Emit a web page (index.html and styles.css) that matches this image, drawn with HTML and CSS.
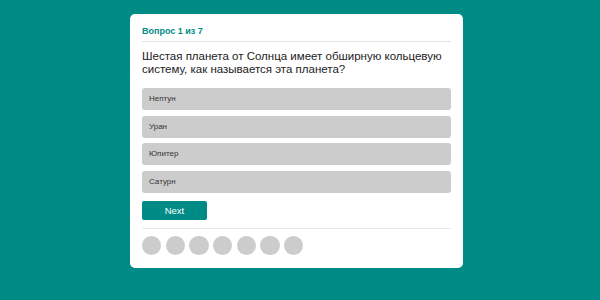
FILE: index.html
```html
<!DOCTYPE html>
<html lang="ru">
<head>
    <meta charset="UTF-8">
    <title>Викторина</title>
    <link rel="stylesheet" href="styles.css">
</head>
<body>
    <div class="quiz">
        <div class="quiz-head">Вопрос 1 из 7</div>
        <p class="question">Шестая планета от Солнца имеет обширную кольцевую систему, как называется эта планета?</p>
        <div class="answers">
            <div class="answer">Нептун</div>
            <div class="answer">Уран</div>
            <div class="answer">Юпитер</div>
            <div class="answer">Сатурн</div>
        </div>
        <button class="next">Next</button>
        <div class="progress">
            <span class="dot"></span>
            <span class="dot"></span>
            <span class="dot"></span>
            <span class="dot"></span>
            <span class="dot"></span>
            <span class="dot"></span>
            <span class="dot"></span>
        </div>
    </div>
</body>
</html>
```
FILE: styles.css
```css
body {
    margin: 0;
    padding: 14px 0 0 130px;
    background-color: #008b87;
    font-family: 'Liberation Sans', Arial, sans-serif;
    height: 300px;
    box-sizing: border-box;
}

.quiz {
    width: 333px;
    height: 254px;
    box-sizing: border-box;
    background: #fff;
    border-radius: 5px;
    padding: 12px 12px 0 12px;
}

.quiz-head {
    color: #008b87;
    font-size: 9px;
    line-height: 10px;
    font-weight: bold;
    padding-bottom: 5px;
    border-bottom: 1px solid #e3e3e3;
}

.question {
    margin: 7.5px 0 11.5px;
    font-size: 11.5px;
    line-height: 13.5px;
    color: #222;
}

.answers {
    display: flex;
    flex-direction: column;
    gap: 5.7px;
}

.answer {
    background: #cccccc;
    border-radius: 3px;
    height: 22px;
    line-height: 22px;
    padding: 0 7px;
    font-size: 8px;
    color: #333;
}

.next {
    display: block;
    margin-top: 8px;
    width: 65px;
    height: 19px;
    border: none;
    border-radius: 2px;
    background: #008b87;
    color: #fff;
    font-family: inherit;
    font-size: 9.5px;
    padding: 0;
}

.progress {
    margin-top: 7.5px;
    padding-top: 7px;
    border-top: 1px solid #e8e8e8;
    display: flex;
    gap: 4.4px;
}

.dot {
    width: 19.3px;
    height: 19.3px;
    border-radius: 50%;
    background: #cccccc;
}
```
